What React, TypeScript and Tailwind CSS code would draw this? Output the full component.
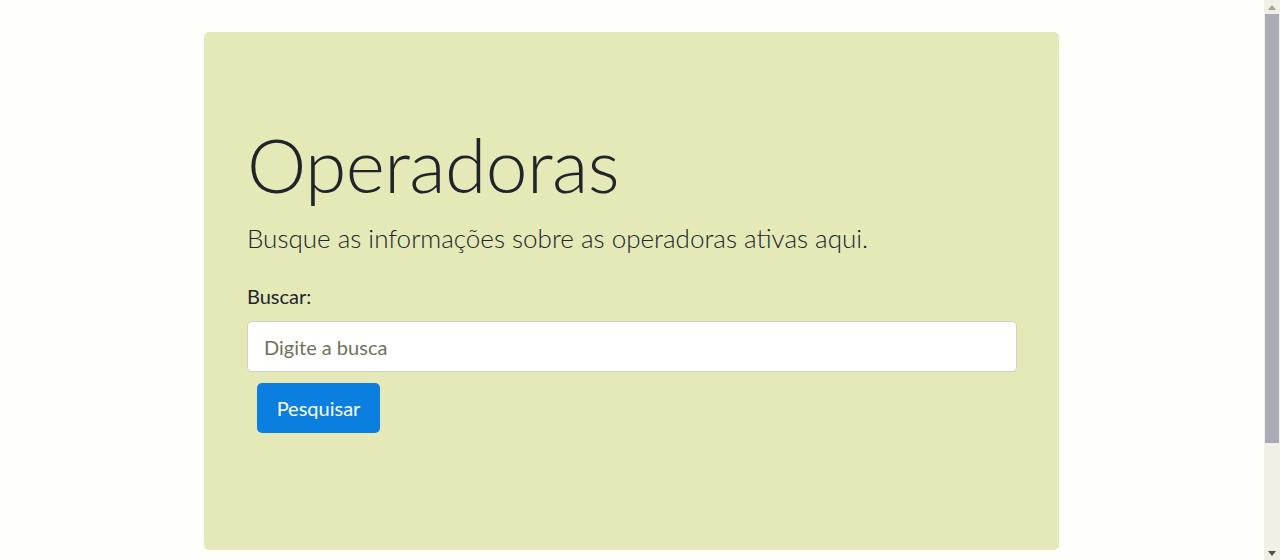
import React from "react";

const App = () => {
  return (
    <div className="flex h-[560px] w-[1280px] overflow-hidden bg-[#fefefa] font-['Lato','Open_Sans',sans-serif] text-[#212529]">
      {/* Page */}
      <div className="flex-1 pt-[32px]">
        <div className="ml-[204px] h-[518px] w-[855px] rounded-[5px] bg-[#e5e9b8] pl-[43px] pr-[43px] pt-[87px]">
          <h1 className="text-[75px] font-light leading-[90px] tracking-[-0.6px]">Operadoras</h1>
          <p className="mt-[11px] text-[26px] font-light leading-[36px]">
            Busque as informações sobre as operadoras ativas aqui.
          </p>

          {/* Search form */}
          <div className="mt-[25px]">
            <label className="block text-[20px] leading-[30px]">Buscar:</label>
            <input
              type="text"
              placeholder="Digite a busca"
              className="mt-[10px] block h-[51px] w-[770px] rounded-[5px] border border-[#cfd2c4] bg-white px-[16px] text-[20px] placeholder:text-[#6e7358] outline-none"
            />
            <button className="ml-[10px] mt-[11px] h-[50px] w-[123px] rounded-[5px] bg-[#0b7fe0] text-[20px] text-white">
              Pesquisar
            </button>
          </div>
        </div>
      </div>

      {/* Scrollbar */}
      <div className="flex w-[16px] flex-col bg-[#f0f0e4]">
        <div className="flex h-[14px] items-center justify-center">
          <svg width="8" height="5" viewBox="0 0 8 5">
            <path d="M0 5 L4 0 L8 5 Z" fill="#a3a3a3" />
          </svg>
        </div>
        <div className="mx-[1px] h-[429px] bg-[#ababb5]" />
        <div className="flex-1" />
        <div className="flex h-[14px] items-center justify-center">
          <svg width="8" height="5" viewBox="0 0 8 5">
            <path d="M0 0 L8 0 L4 5 Z" fill="#505050" />
          </svg>
        </div>
      </div>
    </div>
  );
};

export default App;
